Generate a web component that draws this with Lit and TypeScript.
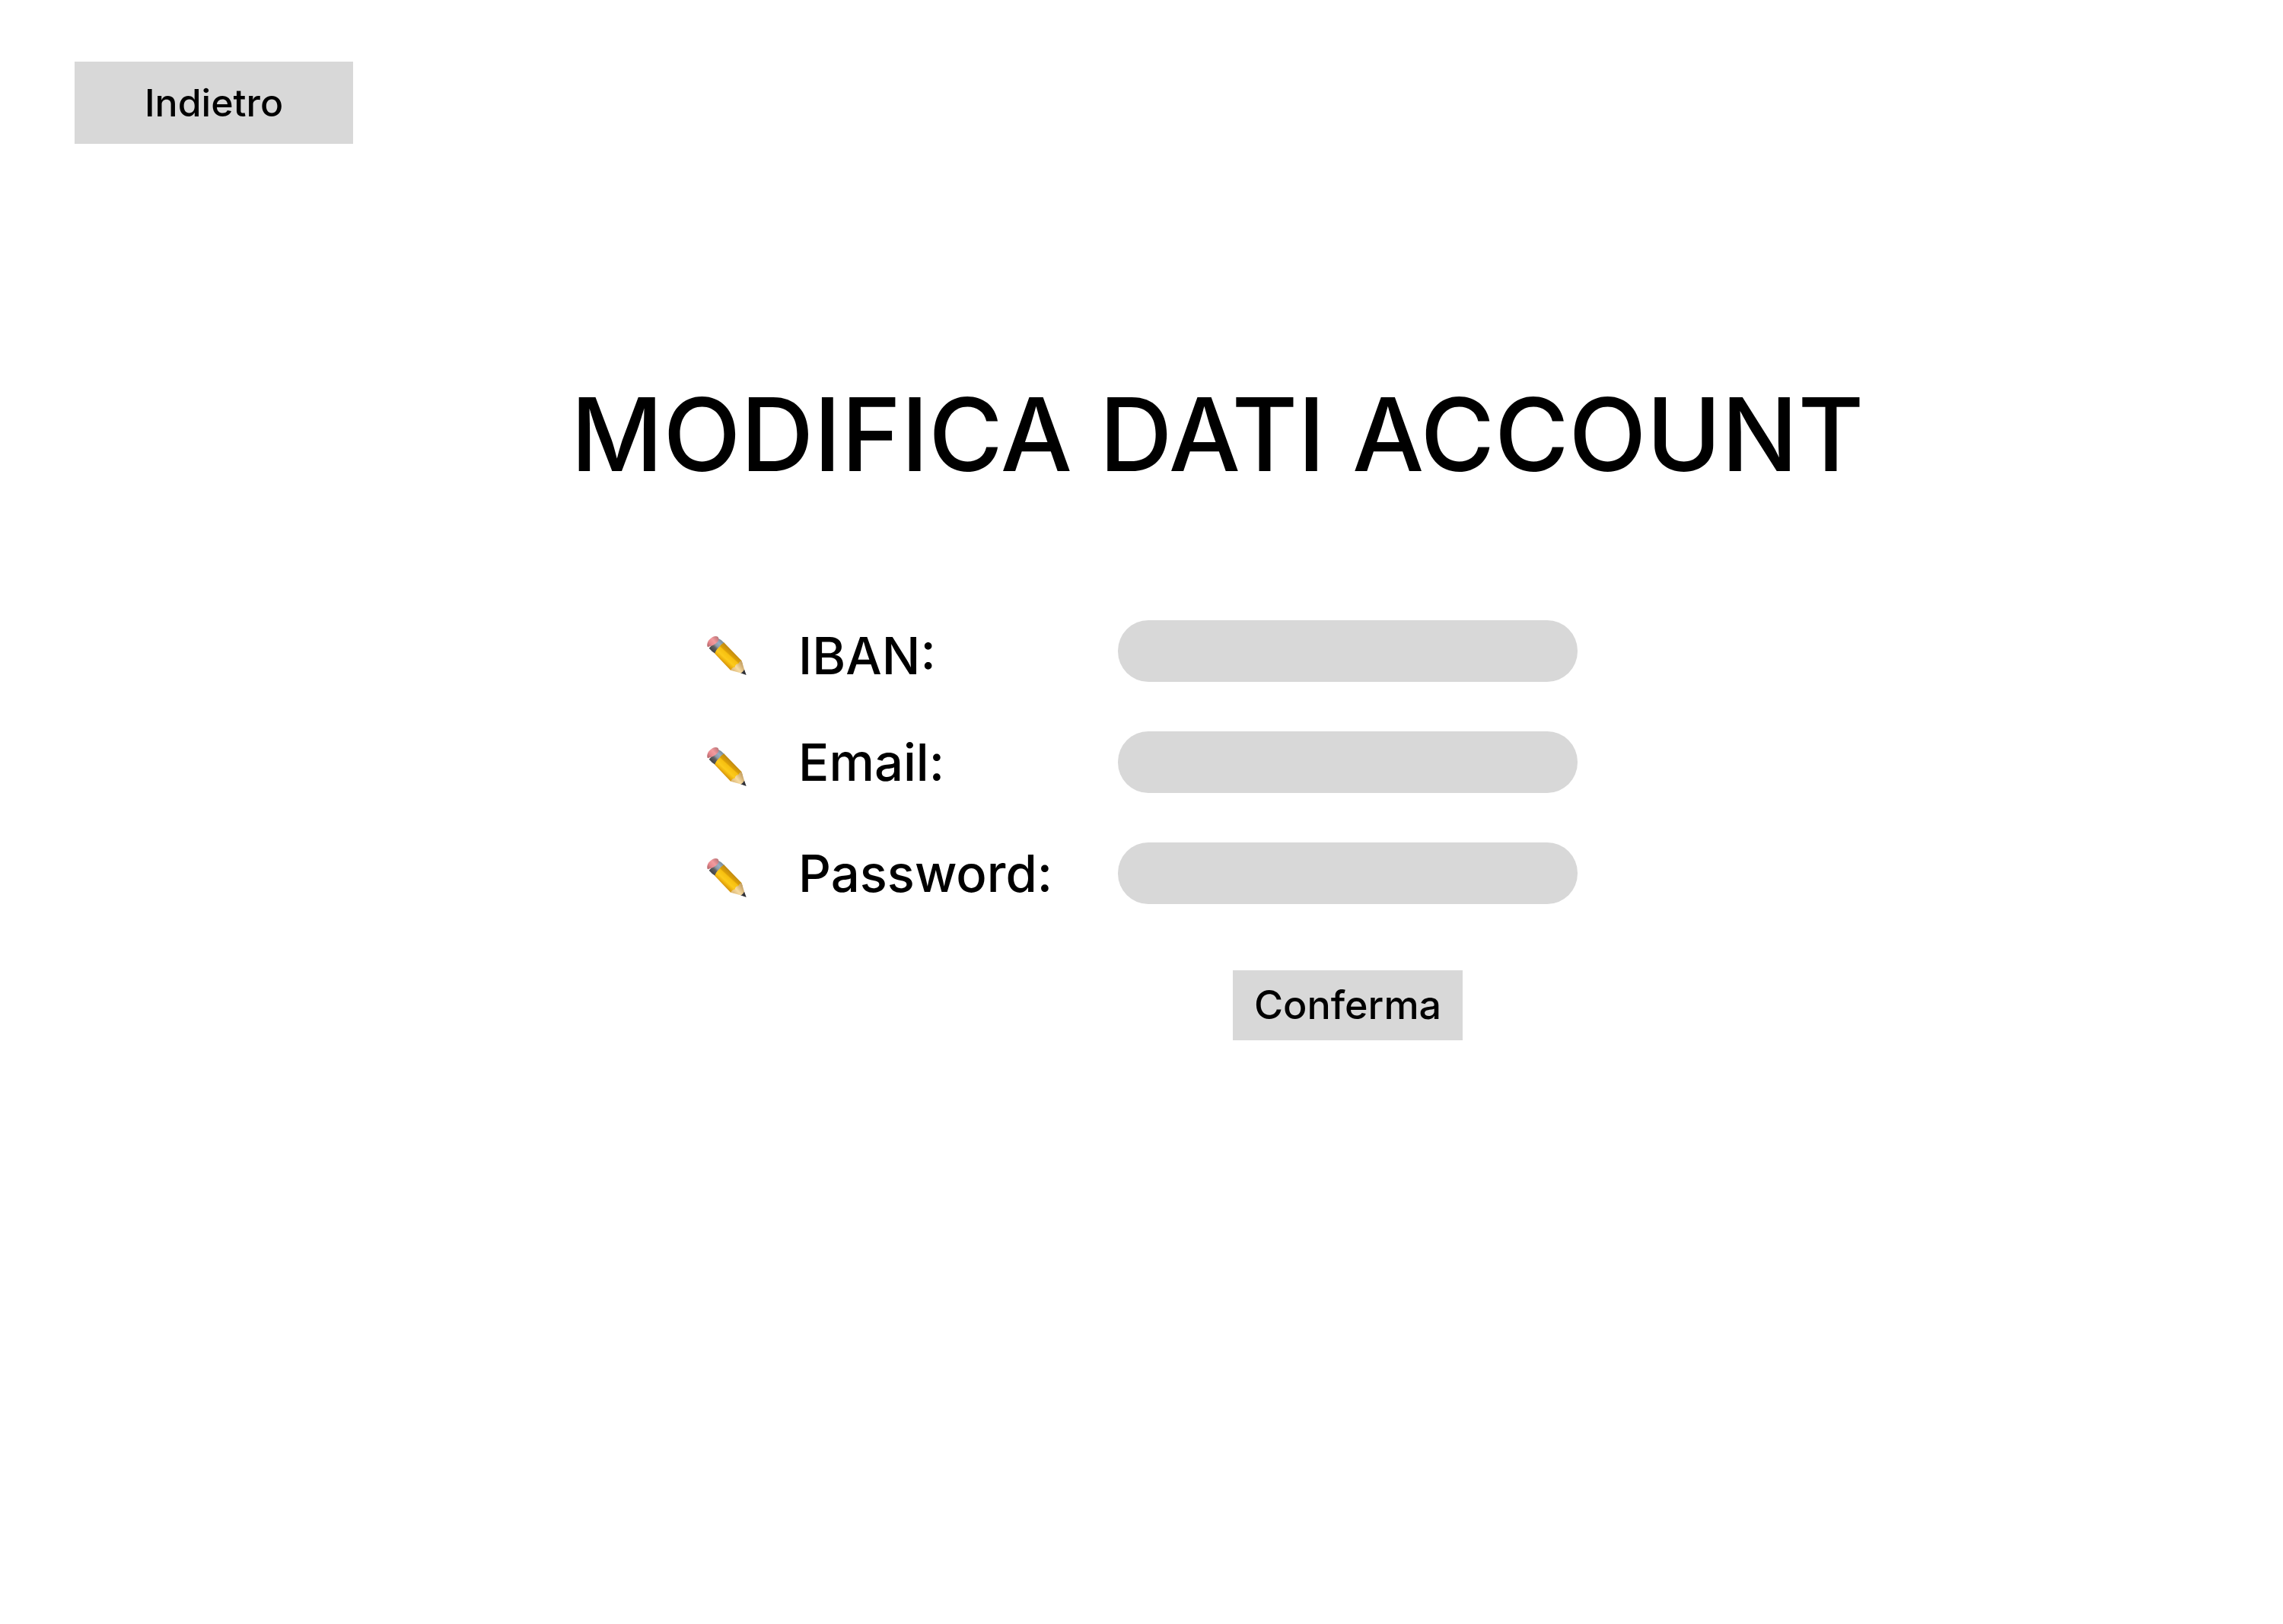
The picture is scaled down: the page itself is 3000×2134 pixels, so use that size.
import { LitElement, html, css } from "lit";
import { customElement } from "lit/decorators.js";

interface Field {
  id: string;
  label: string;
  type: string;
  low?: boolean;
}

const FIELDS: Field[] = [
  { id: "iban", label: "IBAN:", type: "text", low: true },
  { id: "email", label: "Email:", type: "email" },
  { id: "password", label: "Password:", type: "password" },
];

@customElement("pencil-icon")
export class PencilIcon extends LitElement {
  static styles = css`
    :host {
      display: block;
      width: 56px;
      height: 56px;
    }
    .icon {
      display: block;
      width: 100%;
      height: 100%;
    }
  `;

  render() {
    return html`
      <svg class="icon" viewBox="36 42 168 168" aria-hidden="true">
        <defs>
          <linearGradient id="body" gradientUnits="userSpaceOnUse" x1="106" y1="150" x2="144" y2="108">
            <stop offset="0" stop-color="#d99a10" />
            <stop offset="0.14" stop-color="#f0b40e" />
            <stop offset="0.3" stop-color="#fccb1c" />
            <stop offset="0.62" stop-color="#f7c010" />
            <stop offset="0.7" stop-color="#dca006" />
            <stop offset="1" stop-color="#c08a14" />
          </linearGradient>
          <linearGradient id="metal" gradientUnits="userSpaceOnUse" x1="62" y1="106" x2="100" y2="68">
            <stop offset="0" stop-color="#444547" />
            <stop offset="0.32" stop-color="#5f6062" />
            <stop offset="0.5" stop-color="#8f9aa5" />
            <stop offset="0.75" stop-color="#94adc4" />
            <stop offset="1" stop-color="#7e909e" />
          </linearGradient>
          <linearGradient id="rubber" gradientUnits="userSpaceOnUse" x1="46" y1="88" x2="86" y2="54">
            <stop offset="0" stop-color="#b5666a" />
            <stop offset="0.3" stop-color="#e8898e" />
            <stop offset="0.6" stop-color="#f29a9e" />
            <stop offset="1" stop-color="#bd767a" />
          </linearGradient>
          <linearGradient id="wood" gradientUnits="userSpaceOnUse" x1="146" y1="186" x2="180" y2="158">
            <stop offset="0" stop-color="#e0bc7c" />
            <stop offset="0.45" stop-color="#f6dba2" />
            <stop offset="1" stop-color="#c9a569" />
          </linearGradient>
        </defs>
        <path fill="url(#metal)" d="M86 56Q101 62 110 74L76 118Q62 110 50 95Z" />
        <path fill="url(#rubber)" d="M45 91C40 82 44 67 54 59C63 50 76 44 86 51L89 60Q88 68 78 76Q66 86 54 88Z" />
        <path fill="url(#body)" d="M109 73L178 144L182 156L150 184L135 182L73 117Q76 103 90 91Q100 78 109 73Z" />
        <path fill="url(#wood)" d="M135 182Q143 169 152 170Q155 156 166 157Q170 146 179 145L195 199Z" />
        <path fill="#2e3038" d="M189 179L197 201L174 193Q183 191 189 179Z" />
      </svg>
    `;
  }
}

@customElement("app-root")
export class AppRoot extends LitElement {
  static styles = css`
    :host {
      display: block;
      min-height: 100vh;
      background: #ffffff;
      color: #000000;
      font-family: Inter, "Liberation Sans", sans-serif;
      font-weight: 500;
    }
    * {
      box-sizing: border-box;
    }
    button,
    input {
      border: 0;
      margin: 0;
      padding: 0;
      font: inherit;
      color: inherit;
      background: #d8d8d8;
    }
    button {
      cursor: pointer;
    }
    .top {
      display: flex;
      padding: 81px 98px 0;
    }
    .action {
      line-height: 60px;
    }
    .back {
      padding: 24px 92px;
      font-size: 50px;
    }
    .title {
      margin: 301px 0 0;
      padding-left: 25%;
      font-size: 133px;
      line-height: 162px;
      font-weight: 500;
    }
    .form {
      display: flex;
      flex-direction: column;
      gap: 59px;
      width: 1146px;
      max-width: 100%;
      margin: 163px auto 0;
    }
    .row {
      display: grid;
      grid-template-columns: 122px 420px minmax(0, 1fr);
      min-height: 87px;
    }
    .edit {
      display: grid;
      align-items: center;
      align-self: end;
      justify-self: start;
      height: 81px;
      background: none;
    }
    .label {
      align-self: start;
      font-size: 67px;
      line-height: 81px;
    }
    .label-low {
      align-self: end;
    }
    .field {
      width: 100%;
      height: 81px;
      padding: 0 40px;
      border-radius: 40px;
      font-size: 50px;
    }
    .footer {
      display: grid;
      grid-template-columns: 542px minmax(0, 1fr);
      padding-top: 22px;
    }
    .confirm {
      grid-column: 2;
      justify-self: center;
      padding: 16px 28px;
      font-size: 52px;
    }
  `;

  private renderField(field: Field) {
    return html`
      <div class="row">
        <button class="edit" type="button" aria-label="Modifica ${field.label}">
          <pencil-icon></pencil-icon>
        </button>
        <label class="label ${field.low ? "label-low" : ""}" for=${field.id}>${field.label}</label>
        <input class="field" id=${field.id} name=${field.id} type=${field.type} />
      </div>
    `;
  }

  render() {
    return html`
      <header class="top">
        <button class="action back" type="button">Indietro</button>
      </header>
      <main>
        <h1 class="title">MODIFICA DATI ACCOUNT</h1>
        <form class="form" @submit=${(e: Event) => e.preventDefault()}>
          ${FIELDS.map((field) => this.renderField(field))}
          <div class="footer">
            <button class="action confirm" type="submit">Conferma</button>
          </div>
        </form>
      </main>
    `;
  }
}
